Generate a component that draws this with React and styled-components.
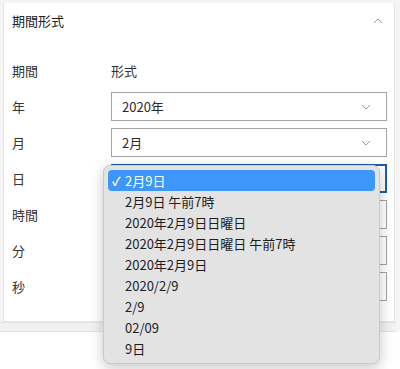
import styled, { createGlobalStyle } from "styled-components";

const GlobalStyle = createGlobalStyle`
  html, body {
    margin: 0;
    padding: 0;
    background: #fff;
    font-family: "Noto Sans CJK JP", "Noto Sans", sans-serif;
    color: #2a2a2a;
  }
`;

const Page = styled.div`
  width: 400px;
  height: 369px;
  background: #fff;
  position: relative;
`;

const Panel = styled.div`
  background: #f5f5f5;
  padding: 3px 5px 0 3px;
  box-sizing: border-box;
`;

const Card = styled.section`
  background: #fff;
  border: 1px solid #e6e6e6;
  border-top: none;
  height: 319px;
  box-sizing: border-box;
`;

const Header = styled.div`
  display: flex;
  align-items: center;
  justify-content: space-between;
  height: 35px;
  padding: 0 11px 0 8px;
  font-size: 13px;
  color: #222;
`;

const Body = styled.div`
  padding: 22px 7px 0 8px;
  display: flex;
  flex-direction: column;
  gap: 7px;
`;

const Row = styled.div`
  display: grid;
  grid-template-columns: 99px 1fr;
  align-items: center;
  height: ${(p) => (p.$head ? "20px" : "29px")};
  margin-bottom: ${(p) => (p.$head ? "5px" : "0")};
  font-size: 13px;
  color: #333;
`;

const SelectBox = styled.div`
  position: relative;
  height: 29px;
  box-sizing: border-box;
  border: 1px solid ${(p) => (p.$focus ? "#1c5ea3" : "#a3a3a3")};
  box-shadow: ${(p) => (p.$focus ? "0 0 0 1px #1c5ea3 inset" : "none")};
  display: flex;
  align-items: center;
  justify-content: space-between;
  padding: 0 15px 0 10px;
  font-size: 13px;
  color: #2a2a2a;
`;

const Band = styled.div`
  height: 8px;
  margin: 0 -1px 0 -3px;
  background: #f1f1f1;
  border-top: 1px solid #e4e4e4;
  border-bottom: 1px solid #e4e4e4;
`;

const Menu = styled.ul`
  position: absolute;
  left: -9px;
  top: 0;
  width: 277px;
  margin: 0;
  padding: 4px;
  box-sizing: border-box;
  list-style: none;
  background: #e3e3e3;
  border: 1px solid #cacaca;
  border-radius: 7px;
  box-shadow: 0 4px 14px rgba(0, 0, 0, 0.22);
  z-index: 5;
`;

const MenuItem = styled.li`
  position: relative;
  height: 21px;
  line-height: 21px;
  padding-left: 17px;
  border-radius: 4px;
  font-size: 13px;
  color: ${(p) => (p.$active ? "#fff" : "#1e1e1e")};
  background: ${(p) => (p.$active ? "#3d97f9" : "transparent")};
  white-space: nowrap;
`;

const Check = styled.span`
  position: absolute;
  left: 4px;
  top: 0;
  font-size: 12px;
  font-weight: 700;
`;

function Chevron({ up }) {
  return (
    <svg width="10" height="6" viewBox="0 0 10 6">
      <polyline
        points={up ? "1,5 5,1 9,5" : "1,1 5,5 9,1"}
        fill="none"
        stroke="#9a9a9a"
        strokeWidth="1"
      />
    </svg>
  );
}

const formats = [
  "2月9日",
  "2月9日 午前7時",
  "2020年2月9日日曜日",
  "2020年2月9日日曜日 午前7時",
  "2020年2月9日",
  "2020/2/9",
  "2/9",
  "02/09",
  "9日",
];

// values of the rows hidden under the open menu are left empty
const rows = [
  { label: "年", value: "2020年" },
  { label: "月", value: "2月" },
  { label: "日", value: "", open: true },
  { label: "時間", value: "" },
  { label: "分", value: "" },
  { label: "秒", value: "" },
];

export default function App() {
  return (
    <Page>
      <GlobalStyle />
      <Panel>
        <Card>
          <Header>
            <span>期間形式</span>
            <Chevron up />
          </Header>
          <Body>
            <Row $head>
              <span>期間</span>
              <span>形式</span>
            </Row>
            {rows.map((r) => (
              <Row key={r.label}>
                <span>{r.label}</span>
                <SelectBox $focus={r.open}>
                  <span>{r.value}</span>
                  <Chevron />
                  {r.open && (
                    <Menu>
                      {formats.map((f, i) => (
                        <MenuItem key={f} $active={i === 0}>
                          {i === 0 && <Check>✓</Check>}
                          {f}
                        </MenuItem>
                      ))}
                    </Menu>
                  )}
                </SelectBox>
              </Row>
            ))}
          </Body>
        </Card>
        <Band />
      </Panel>
    </Page>
  );
}
